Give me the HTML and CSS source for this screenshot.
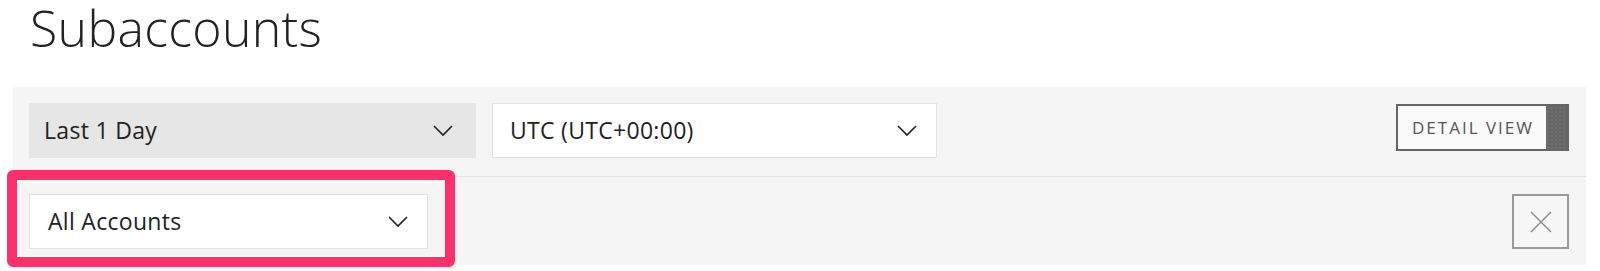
FILE: index.html
```html
<!DOCTYPE html>
<html>
<head>
<meta charset="utf-8">
<link rel="stylesheet" href="styles.css">
</head>
<body>
  <header class="head">
    <h1 class="title">Subaccounts</h1>
  </header>
  <div class="panel">
    <div class="row row-top">
      <div class="select select-grey sel-range">
        <span class="label">Last 1 Day</span>
        <svg class="chev" width="20" height="12" viewBox="0 0 20 12"><path d="M1 1 L10 10 L19 1" fill="none" stroke="#222" stroke-width="1.6"/></svg>
      </div>
      <div class="select select-white sel-tz">
        <span class="label">UTC (UTC+00:00)</span>
        <svg class="chev" width="20" height="12" viewBox="0 0 20 12"><path d="M1 1 L10 10 L19 1" fill="none" stroke="#222" stroke-width="1.6"/></svg>
      </div>
      <div class="spacer"></div>
      <div class="detail-btn">
        <span class="detail-text">DETAIL VIEW</span>
        <span class="detail-knob"></span>
      </div>
    </div>
    <div class="row row-bottom">
      <div class="select select-white sel-acct">
        <span class="label">All Accounts</span>
        <svg class="chev" width="20" height="12" viewBox="0 0 20 12"><path d="M1 1 L10 10 L19 1" fill="none" stroke="#222" stroke-width="1.6"/></svg>
      </div>
      <div class="spacer"></div>
      <div class="close-btn">
        <svg width="22" height="22" viewBox="0 0 22 22"><path d="M1 1 L21 21 M21 1 L1 21" fill="none" stroke="#888" stroke-width="1.4"/></svg>
      </div>
      <div class="highlight"></div>
    </div>
  </div>
</body>
</html>
```

FILE: styles.css
```css
html, body {
  margin: 0;
  padding: 0;
  background: #ffffff;
}
body {
  font-family: "Open Sans", "Liberation Sans", sans-serif;
  color: #222;
  width: 1600px;
  height: 271px;
  overflow: hidden;
}
.head {
  height: 87px;
  display: flex;
  align-items: flex-start;
  padding-left: 30px;
}
.title {
  margin: 0;
  padding: 0;
  font-weight: 300;
  font-size: 50px;
  line-height: 56px;
  color: #222;
  letter-spacing: 0.3px;
}
.panel {
  margin-left: 13px;
  width: 1573px;
  height: 178px;
  background: #f5f5f5;
}
.row {
  display: flex;
  align-items: flex-start;
  padding: 0 17px 0 16px;
  position: relative;
}
.row-top {
  padding-top: 16px;
  box-sizing: border-box;
  border-bottom: 1px solid #e4e4e4;
  gap: 16px;
  height: 90px;
}
.row-bottom {
  height: 88px;
  padding-top: 17px;
  box-sizing: border-box;
}
.spacer { flex: 1; }
.select {
  height: 55px;
  box-sizing: border-box;
  display: flex;
  align-items: center;
  justify-content: space-between;
  font-size: 23px;
  letter-spacing: 0.3px;
  color: #222;
}
.select-grey {
  background: #e6e6e6;
  padding: 0 23px 0 15px;
}
.select-white {
  background: #ffffff;
  border: 1px solid #e3e3e3;
  padding: 0 19px 0 17px;
}
.sel-range { width: 447px; }
.sel-tz { width: 445px; }
.sel-acct { width: 399px; padding-left: 18px; }
.label { line-height: 32px; padding-bottom: 1px; }
.chev { display: block; }
.detail-btn {
  margin-top: 1px;
  height: 47px;
  width: 173px;
  box-sizing: border-box;
  border: 2px solid #666;
  display: flex;
  background: #fafafa;
}
.detail-text {
  flex: 1;
  display: flex;
  align-items: center;
  justify-content: center;
  font-size: 17px;
  letter-spacing: 2px;
  color: #555;
  padding-left: 2px;
}
.detail-knob {
  width: 21px;
  background-color: #666;
  background-image: radial-gradient(#7a7a7a 0.6px, transparent 0.8px);
  background-size: 4px 4px;
}
.close-btn {
  width: 57px;
  height: 55px;
  box-sizing: border-box;
  border: 2px solid #9a9a9a;
  display: flex;
  align-items: center;
  justify-content: center;
  background: #f7f7f7;
}
.highlight {
  position: absolute;
  left: -6px;
  top: -7px;
  width: 448px;
  height: 97px;
  box-sizing: border-box;
  border: 10px solid #ff2f6d;
  border-radius: 6px;
  pointer-events: none;
}
```
